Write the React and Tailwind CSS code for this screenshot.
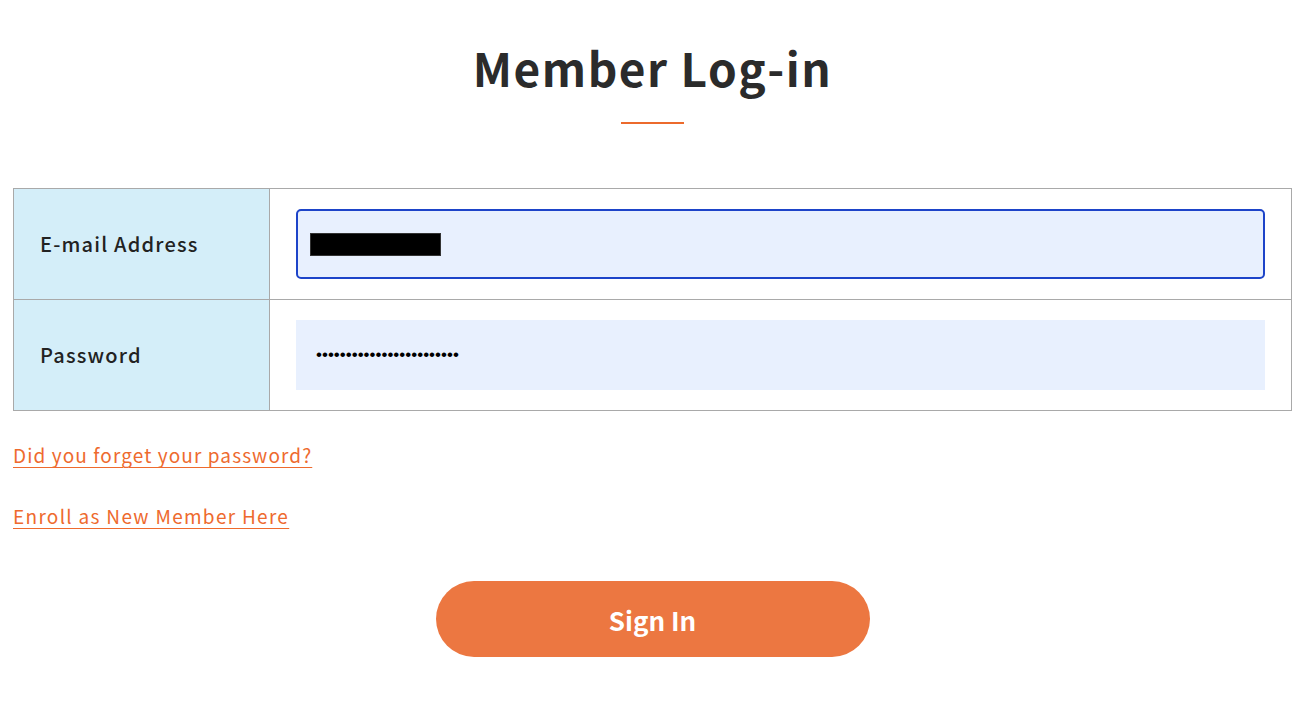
import { useState } from "react";

const LoginPage = () => {
  const [dots] = useState("•".repeat(24));

  return (
    <div
      className="w-full min-h-screen bg-white pl-[13px] pr-[12px] pt-[35px]"
      style={{ fontFamily: '"Noto Sans CJK JP", "Noto Sans", sans-serif' }}
    >
      <h1 className="text-center text-[46px] font-bold leading-[64px] tracking-[1.5px] text-[#2b2b2b]">
        Member Log-in
      </h1>
      <div className="mx-auto mt-[23px] h-[2px] w-[63px] bg-[#ec6a2c]" />

      {/* Form table */}
      <div className="mt-[64px] border border-[#a9a9a9]">
        <div className="flex h-[111px] border-b border-[#a9a9a9]">
          <div className="flex w-[256px] shrink-0 items-center border-r border-[#a9a9a9] bg-[#d4eef9] pl-[26px] text-[20px] font-medium tracking-[1.2px] text-[#222]">
            E-mail Address
          </div>
          <div className="flex flex-1 items-center pl-[26px] pr-[26px]">
            <div className="flex h-[70px] w-full items-center rounded-[5px] border-2 border-[#1d44c9] bg-[#e8f0fe] pl-[12px]">
              <div className="h-[23px] w-[131px] border border-[#333] bg-black" />
            </div>
          </div>
        </div>
        <div className="flex h-[110px]">
          <div className="flex w-[256px] shrink-0 items-center border-r border-[#a9a9a9] bg-[#d4eef9] pl-[26px] text-[20px] font-medium tracking-[1.2px] text-[#222]">
            Password
          </div>
          <div className="flex flex-1 items-center pl-[26px] pr-[26px]">
            <div
              className="flex h-[70px] w-full items-center bg-[#e8f0fe] pl-[20px] text-[17px] text-black"
              style={{ fontFamily: '"Liberation Sans", Arial, sans-serif' }}
            >
              {dots}
            </div>
          </div>
        </div>
      </div>

      {/* Links */}
      <div className="mt-[29px] flex flex-col items-start gap-[32px] text-[19px] leading-[29px] tracking-[1.1px] text-[#ee6a2e]">
        <a href="#" className="underline underline-offset-[4px] decoration-1">
          Did you forget your password?
        </a>
        <a href="#" className="underline underline-offset-[4px] decoration-1 tracking-[1.3px]">
          Enroll as New Member Here
        </a>
      </div>

      <div className="mt-[51px] flex justify-center">
        <button className="h-[76px] w-[434px] rounded-full bg-[#ec7741] text-[26px] font-bold text-white">
          Sign In
        </button>
      </div>
    </div>
  );
};

export default function App() {
  return <LoginPage />;
}
